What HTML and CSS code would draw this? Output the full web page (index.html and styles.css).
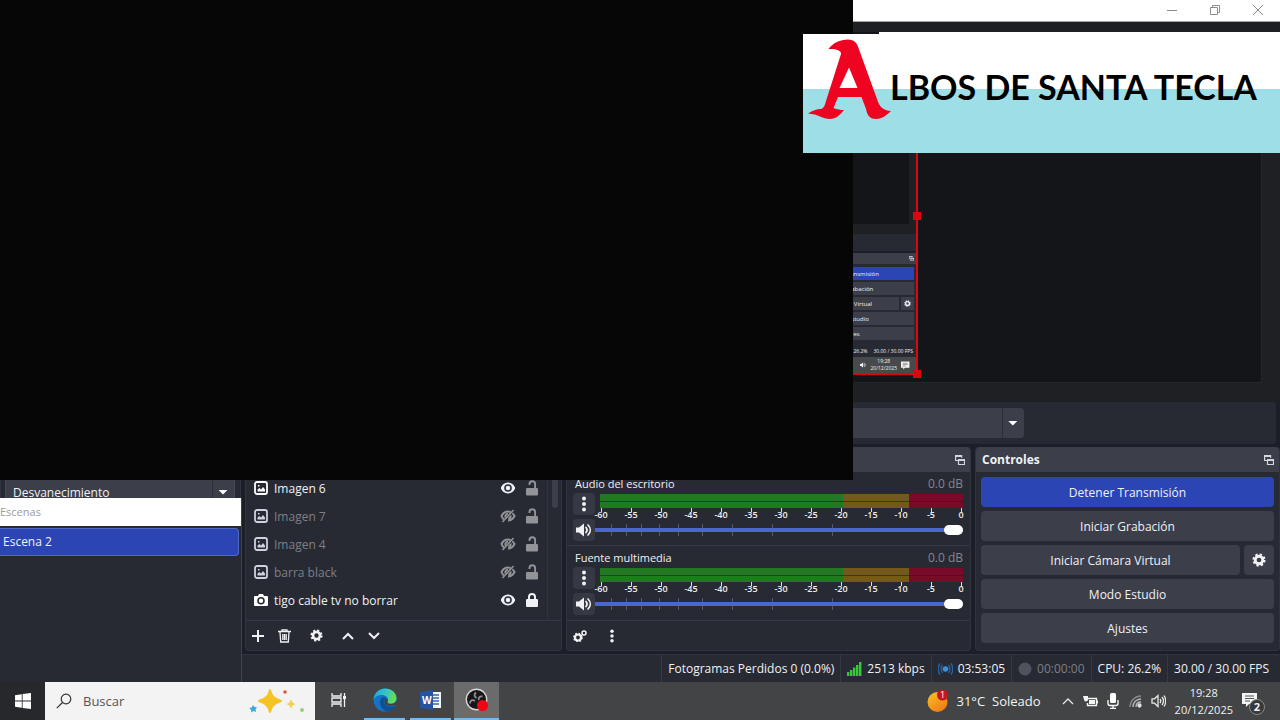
FILE: index.html
```html
<!DOCTYPE html>
<html lang="es">
<head>
    <meta charset="UTF-8">
    <meta name="viewport" content="width=device-width, initial-scale=1.0">
    <title>Albos de Santa Tecla</title>
    <link rel="stylesheet" href="styles.css">
</head>
<body>
    <!-- Shared icons -->
    <svg class="sprite" aria-hidden="true">
        <symbol id="i-image" viewBox="0 0 14 14"><rect x="1" y="1" width="12" height="12" rx="2" fill="none" stroke="currentColor" stroke-width="1.8"/><path d="M3.500 10.500V8.500L5.500 7l1.500 1.500L9 6l2 2.500v2zM4 4h1.500v1.500H4z" fill="currentColor"/></symbol>
        <symbol id="i-camera" viewBox="0 0 14 14"><path fill="currentColor" fill-rule="evenodd" d="M4 3l1-2h4l1 2h3a1 1 0 0 1 1 1v8a1 1 0 0 1-1 1H1a1 1 0 0 1-1-1V4a1 1 0 0 1 1-1zm3 1a3.800 3.800 0 1 0 0 7.600A3.800 3.800 0 0 0 7 4zm0 1.600a2.200 2.200 0 1 1 0 4.400 2.200 2.200 0 0 1 0-4.400z"/></symbol>
        <symbol id="i-eye" viewBox="0 0 16 14"><path fill="currentColor" fill-rule="evenodd" d="M8 1.500c3.500 0 6 2.300 7.300 5.500C14 10.200 11.500 12.500 8 12.500S2 10.200.7 7C2 3.800 4.500 1.500 8 1.500zm0 1.700a3.800 3.800 0 1 0 0 7.600 3.800 3.800 0 0 0 0-7.600zm0 1.500a2.300 2.300 0 1 1 0 4.600 2.300 2.300 0 0 1 0-4.600z"/></symbol>
        <symbol id="i-eye-off" viewBox="0 0 16 14"><path fill="none" stroke="currentColor" stroke-width="2" d="M4 10.500C2.700 9.600 2 8.400 1.500 7 3 4 5.300 2.500 8 2.500c1 0 1.800.2 2.500.5M12.300 4.300c1 .8 1.700 1.700 2.200 2.700-1.500 3-3.800 4.500-6.500 4.500M5.500 8.500C5 6.500 6 5 8 4.800M10.600 6.500c.2 1.500-.8 2.700-2.300 2.900"/><path d="M2.500 13L13.500 1" stroke="currentColor" stroke-width="1.600"/></symbol>
        <symbol id="i-unlock" viewBox="0 0 14 16"><path d="M4.500 5V4a2.800 2.800 0 0 1 5.600 0v5" fill="none" stroke="currentColor" stroke-width="1.900"/><rect x="1" y="8" width="12" height="7.500" rx="1" fill="currentColor"/></symbol>
        <symbol id="i-lock" viewBox="0 0 14 16"><path d="M4 8V5a3 3 0 0 1 6 0v3" fill="none" stroke="currentColor" stroke-width="2"/><rect x="1" y="7" width="12" height="8" rx="1" fill="currentColor"/></symbol>
        <symbol id="i-gear" viewBox="0 0 16 16"><circle cx="8" cy="8" r="4.300" fill="none" stroke="currentColor" stroke-width="3.200"/><circle cx="8" cy="8" r="6.200" fill="none" stroke="currentColor" stroke-width="2.600" stroke-dasharray="2.600 2.270"/></symbol>
        <symbol id="i-dots" viewBox="0 0 4 16"><g fill="currentColor"><circle cx="2" cy="2.500" r="2"/><circle cx="2" cy="8" r="2"/><circle cx="2" cy="13.500" r="2"/></g></symbol>
        <symbol id="i-speaker" viewBox="0 0 16 14"><path d="M0 4.500h3L8 .5v13L3 9.500H0z" fill="currentColor"/><path d="M10 4.500c1.300 1.500 1.300 3.500 0 5M12 2c3 3 3 7 0 10" fill="none" stroke="currentColor" stroke-width="1.700" stroke-linecap="round"/></symbol>
        <symbol id="i-float" viewBox="0 0 10 10"><path d="M3 5.500H.6V.6h6v2.200M.6 1.500h6M3.500 4.500h6v5h-6zM3.500 5.500h6" fill="none" stroke="currentColor" stroke-width="1.200"/></symbol>
        <symbol id="i-note" viewBox="0 0 16 16"><path d="M0 1h15v11H7l-3 3v-3H0z" fill="#f4f4f4"/><path d="M3 4h9M3 6.500h9M3 9h5" stroke="#555" stroke-width="1"/></symbol>
    </svg>

    <!-- Window title bar -->
    <header class="titlebar">
        <button aria-label="Minimizar"><svg width="10" height="10"><path d="M0 5.500h10"/></svg></button>
        <button aria-label="Restaurar"><svg width="10" height="10"><path d="M.5 2.500h7v7h-7zM2.500 2.500v-2h7v7h-2"/></svg></button>
        <button aria-label="Cerrar"><svg width="10" height="10"><path d="M0 0l10 10M10 0L0 10"/></svg></button>
    </header>

    <!-- Preview -->
    <main class="preview">
        <div class="canvas">
            <section class="nested">
                <div class="nested-view"></div>
                <div class="nested-bar"></div>
                <div class="nested-head"><svg width="5" height="5"><use href="#i-float"/></svg></div>
                <div class="nested-controls">
                    <div class="nested-btn live">Detener Transmisión</div>
                    <div class="nested-btn">Iniciar Grabación</div>
                    <div class="nested-row">
                        <div class="nested-btn">Iniciar Cámara Virtual</div>
                        <div class="nested-btn cog"><svg width="7" height="7"><use href="#i-gear"/></svg></div>
                    </div>
                    <div class="nested-btn">Modo Estudio</div>
                    <div class="nested-btn">Ajustes</div>
                </div>
                <div class="nested-status"><span>CPU: 26.2%</span><span>30.00 / 30.00 FPS</span></div>
                <div class="nested-taskbar">
                    <svg width="6" height="6"><use href="#i-speaker"/></svg>
                    <span>19:28<br>20/12/2025</span>
                    <svg width="9" height="9"><use href="#i-note"/></svg>
                </div>
                <i class="handle handle-mid"></i>
                <i class="handle handle-end"></i>
            </section>
        </div>
    </main>

    <div class="workspace">
        <div class="context-bar">
            <select aria-label="Fuente"><option></option></select>
        </div>

        <div class="docks">
            <section class="dock transitions">
                <div class="dock-head"></div>
                <select aria-label="Transición"><option>Desvanecimiento</option></select>
            </section>

            <!-- Sources -->
            <section class="dock sources">
                <div class="dock-head"></div>
                <div class="source-area">
                    <ul class="source-list">
                        <li><svg class="type"><use href="#i-image"/></svg><span>Imagen 6</span><svg class="eye"><use href="#i-eye"/></svg><svg class="lock open"><use href="#i-unlock"/></svg></li>
                        <li class="off"><svg class="type"><use href="#i-image"/></svg><span>Imagen 7</span><svg class="eye"><use href="#i-eye-off"/></svg><svg class="lock open"><use href="#i-unlock"/></svg></li>
                        <li class="off"><svg class="type"><use href="#i-image"/></svg><span>Imagen 4</span><svg class="eye"><use href="#i-eye-off"/></svg><svg class="lock open"><use href="#i-unlock"/></svg></li>
                        <li class="off"><svg class="type"><use href="#i-image"/></svg><span>barra black</span><svg class="eye"><use href="#i-eye-off"/></svg><svg class="lock open"><use href="#i-unlock"/></svg></li>
                        <li><svg class="type"><use href="#i-camera"/></svg><span>tigo cable tv no borrar</span><svg class="eye"><use href="#i-eye"/></svg><svg class="lock"><use href="#i-lock"/></svg></li>
                    </ul>
                    <div class="scroll"><div class="scroll-thumb"></div></div>
                </div>
                <div class="toolbar">
                    <button aria-label="Añadir"><svg width="12" height="12"><path d="M6 0v12M0 6h12" stroke="currentColor" stroke-width="2"/></svg></button>
                    <button aria-label="Eliminar"><svg width="13" height="14"><path d="M0 2.500h13M4 2V.8h5V2M2 3l.7 10h7.600L11 3M4.800 5v6M6.500 5v6M8.200 5v6" fill="none" stroke="currentColor" stroke-width="1.300"/></svg></button>
                    <button class="wide" aria-label="Propiedades"><svg width="13" height="13"><use href="#i-gear"/></svg></button>
                    <button class="wide" aria-label="Subir"><svg width="12" height="8"><path d="M1 7l5-5 5 5" fill="none" stroke="currentColor" stroke-width="2"/></svg></button>
                    <button aria-label="Bajar"><svg width="12" height="8"><path d="M1 1l5 5 5-5" fill="none" stroke="currentColor" stroke-width="2"/></svg></button>
                </div>
            </section>

            <!-- Audio mixer -->
            <section class="dock mixer">
                <div class="dock-head"><svg width="10" height="10"><use href="#i-float"/></svg></div>
                <div class="channel">
                    <label for="vol1">Audio del escritorio</label><output>0.0 dB</output>
                    <button aria-label="Opciones de audio"><svg width="4" height="16"><use href="#i-dots"/></svg></button>
                    <div class="meter">
                        <div class="bar"></div>
                        <div class="scale"><span>-60</span><span>-55</span><span>-50</span><span>-45</span><span>-40</span><span>-35</span><span>-30</span><span>-25</span><span>-20</span><span>-15</span><span>-10</span><span>-5</span><span>0</span></div>
                    </div>
                    <button aria-label="Silenciar"><svg width="16" height="14"><use href="#i-speaker"/></svg></button>
                    <div class="fader">
                        <svg viewBox="0 0 368 12" preserveAspectRatio="none"><path d="M16.500 0v12M31.500 0v12M46.500 0v12M64.500 0v12M83.500 0v12M107.500 0v12M137.500 0v12M177.500 0v12M237.500 0v12"/></svg>
                        <input type="range" id="vol1" min="0" max="100" value="100">
                    </div>
                </div>
                <div class="channel">
                    <label for="vol2">Fuente multimedia</label><output>0.0 dB</output>
                    <button aria-label="Opciones de audio"><svg width="4" height="16"><use href="#i-dots"/></svg></button>
                    <div class="meter">
                        <div class="bar"></div>
                        <div class="scale"><span>-60</span><span>-55</span><span>-50</span><span>-45</span><span>-40</span><span>-35</span><span>-30</span><span>-25</span><span>-20</span><span>-15</span><span>-10</span><span>-5</span><span>0</span></div>
                    </div>
                    <button aria-label="Silenciar"><svg width="16" height="14"><use href="#i-speaker"/></svg></button>
                    <div class="fader">
                        <svg viewBox="0 0 368 12" preserveAspectRatio="none"><path d="M16.500 0v12M31.500 0v12M46.500 0v12M64.500 0v12M83.500 0v12M107.500 0v12M137.500 0v12M177.500 0v12M237.500 0v12"/></svg>
                        <input type="range" id="vol2" min="0" max="100" value="100">
                    </div>
                </div>
                <div class="toolbar">
                    <button aria-label="Propiedades avanzadas"><svg width="14" height="12"><circle cx="5" cy="7.500" r="3" fill="none" stroke="currentColor" stroke-width="2.200"/><circle cx="5" cy="7.500" r="4.300" fill="none" stroke="currentColor" stroke-width="1.200" stroke-dasharray="1.700 1.677"/><circle cx="11" cy="3" r="2" fill="none" stroke="currentColor" stroke-width="1.500"/></svg></button>
                    <button class="wide" aria-label="Menú"><svg width="4" height="14"><use href="#i-dots"/></svg></button>
                </div>
            </section>

            <!-- Controls -->
            <section class="dock controls">
                <div class="dock-head"><h2>Controles</h2><svg width="10" height="10"><use href="#i-float"/></svg></div>
                <div class="control-list">
                    <button class="live">Detener Transmisión</button>
                    <button>Iniciar Grabación</button>
                    <div class="split">
                        <button>Iniciar Cámara Virtual</button>
                        <button class="cog" aria-label="Configurar cámara virtual"><svg width="14" height="14"><use href="#i-gear"/></svg></button>
                    </div>
                    <button>Modo Estudio</button>
                    <button>Ajustes</button>
                </div>
            </section>
        </div>

        <!-- Status bar -->
        <div class="statusbar">
            <span>Fotogramas Perdidos 0 (0.0%)</span>
            <span><svg width="15" height="14"><path fill="#35c935" d="M0 10h2.400v4H0zM3 8h2.400v6H3zM6 5.500h2.400V14H6zM9 3h2.400v11H9zM12 0h2.400v14H12z"/></svg>2513 kbps</span>
            <span><svg width="15" height="14"><circle cx="7.500" cy="7" r="2.800" fill="#3d8fe0"/><path d="M4.500 3c-2 2-2 6 0 8M10.500 3c2 2 2 6 0 8M2 1.500c-2.300 3-2.300 8 0 11M13 1.500c2.300 3 2.300 8 0 11" fill="none" stroke="#2765a8" stroke-width="1.300"/></svg>03:53:05</span>
            <span class="idle"><svg width="14" height="14"><circle cx="7" cy="7" r="6.500" fill="#50525c"/></svg>00:00:00</span>
            <span>CPU: 26.2%</span>
            <span>30.00 / 30.00 FPS</span>
        </div>

        <!-- Floating scenes window -->
        <aside class="scenes">
            <h2>Escenas</h2>
            <ul><li>Escena 2</li></ul>
        </aside>
    </div>

    <!-- Taskbar -->
    <footer class="taskbar">
        <button class="start" aria-label="Inicio"><svg width="16" height="16"><path fill="#fff" d="M0 2.200l6.800-1v6.400H0zM7.600 1.100L16 0v7.600H7.600zM0 8.400h6.800v6.400l-6.800-1zM7.600 8.400H16V16l-8.400-1.100z"/></svg></button>
        <label class="search">
            <svg width="16" height="16"><circle cx="10" cy="6" r="4.800"/><path d="M6.500 9.500L.8 15.200"/></svg>
            <input type="text" placeholder="Buscar" aria-label="Buscar">
            <svg class="stars" width="60" height="26">
                <path fill="#f6c324" d="M21 2c1.500 6 3.500 8.500 11 11-7.500 2.500-9.500 5-11 11-1.500-6-3.500-8.500-11-11 7.500-2.500 9.500-5 11-11z" stroke="#f6c324" stroke-width="2" stroke-linejoin="round"/>
                <path fill="#f3cf4a" d="M42 11c1 3.500 2 4.300 5 5-3 .8-4 1.500-5 5-1-3.500-2-4.200-5-5 3-.7 4-1.500 5-5z"/>
                <path fill="#35a8dc" d="M4 17l1.500 2 2.500.3-1.500 2L7 24l-2.700-1L2 24.500l.2-2.800L0 20l2.800-.6z"/>
                <circle cx="36" cy="4" r="1.800" fill="#e2553d"/><circle cx="53" cy="22" r="1.900" fill="#8fce78"/>
            </svg>
        </label>
        <button class="task" aria-label="Vista de tareas"><svg width="16" height="16"><path d="M1 1v3h9V1M1 15v-3h9v3M1 6h9v4H1zM13.500 1v14" fill="none" stroke="#f2f2f2" stroke-width="1.300"/><path d="M12 4h3v3h-3z" fill="#f2f2f2"/></svg></button>
        <button class="task running" aria-label="Edge"><svg width="24" height="24" viewBox="0 0 24 24">
            <defs><linearGradient id="edgeTop" x1="0" x2="1" y1="0" y2="0.300"><stop offset="0" stop-color="#21a5e0"/><stop offset="0.600" stop-color="#35c6c0"/><stop offset="1" stop-color="#67dd50"/></linearGradient></defs>
            <circle cx="12" cy="12" r="11.500" fill="#1473c4"/>
            <path fill="url(#edgeTop)" d="M.5 12C.8 5.500 5.800.5 12 .5c7 0 11.500 5 11.500 9.500 0 4-3 5.800-6 5.800-2.500 0-3.500-1-3-2 1.200-1.500 1-5-3-6.300C7 6.300 2 8 .5 12z"/>
            <path fill="#0d5299" d="M9 9.500c-4 4-2 12 5 14 4-.5 7-3 8.500-6-3 1.500-7 1.500-9.500-.5-2.500-2-2.500-5 0-7-1-1.200-3-1.300-4-.5z"/>
            <path fill="#404244" d="M12.500 10.500c-1.700 1.500-1.500 4.500.5 6 3 1.800 7 1.500 10 0l.5-3c-2 2.200-5 2.600-7 2.200-2-.4-2.500-1.200-2-2 .7-1 .4-3-2-3.200z"/>
        </svg></button>
        <button class="task running" aria-label="Word"><svg width="22" height="20"><path d="M10 2h11v16H10z" fill="#f3f6fb"/><path d="M12 5h7M12 8h7M12 11h7M12 14h7" stroke="#3c66b0" stroke-width="1.300"/><path d="M0 2l13-2v20L0 18z" fill="#2853a0"/><text class="word-mark" x="2" y="14">W</text></svg></button>
        <button class="task running active" aria-label="OBS"><svg width="24" height="24">
            <circle cx="11.500" cy="11.500" r="10.200" fill="#17171a" stroke="#d6d6d6" stroke-width="1.400"/>
            <path d="M11 4.500c-2 1.500-2 4 .5 5.500M5 15.500c0-3 2.500-4.500 5-2.500M17.500 8.500c-3-.5-4.500 1.500-3.500 3.500" fill="none" stroke="#8f8f94" stroke-width="1.800"/>
            <circle cx="17.500" cy="17.500" r="5.500" fill="#f00512"/>
        </svg></button>
        <div class="tray">
            <a class="weather" href="#"><svg width="22" height="24"><defs><linearGradient id="sun" x1="0" y1="0" x2="0.700" y2="1"><stop offset="0" stop-color="#f8c52b"/><stop offset="1" stop-color="#f07a13"/></linearGradient></defs><circle cx="10.500" cy="13" r="10" fill="url(#sun)"/><circle cx="15.500" cy="6" r="5.500" fill="#c9151e"/><text class="badge-text" x="13" y="9">1</text></svg><span>31°C</span><span>Soleado</span></a>
            <svg class="chevron" width="12" height="8"><path d="M1 7l5-5 5 5"/></svg>
            <svg width="15" height="12"><path d="M5 3.500h8.500v7H4.500V8" fill="none" stroke="#f4f4f4" stroke-width="1.400"/><path d="M6 5h6v4H6zM0 1h5v3.500a2 2 0 0 1-4 0zM14 5.500h1v3h-1z" fill="#f4f4f4"/></svg>
            <svg class="mic" width="12" height="16"><rect x="3" y="0" width="6" height="10" rx="1.500" fill="#fff"/><path d="M1 7v3.500q0 2 2 2h6q2 0 2-2V7M6 12v3M3 15.300h6" fill="none" stroke="#fff" stroke-width="1.300"/></svg>
            <svg class="wifi" width="14" height="14"><path d="M2 13C2 7 7 2 13 2" stroke="#8a8a8a"/><path d="M5 13c0-4.500 3.500-8 8-8M8 13c0-3 2-5 5-5" stroke="#bbb"/><circle cx="11.500" cy="11.500" r="1.500" fill="#ddd"/></svg>
            <svg class="sound" width="15" height="14"><path d="M1 4.800h2.500L7 1.500v11L3.500 9.200H1zM9 5q1.500 2 0 4M11 3q3 4 0 8M13 1.500q3.500 5.500 0 11"/></svg>
            <time datetime="2025-12-20T19:28">19:28<br>20/12/2025</time>
            <div class="notes"><svg width="16" height="16"><use href="#i-note"/></svg><b>2</b></div>
        </div>
    </footer>

    <!-- Stream overlays -->
    <div class="blackout"></div>
    <div class="banner">
        <div class="crest">
            <svg width="90" height="90"><path fill="#ee0420" fill-rule="evenodd" d="M25.500 15C30 9 37 5.500 45 5.500c6 0 9 3.500 10.500 8.500l18.500 51c2.500 8 6 11.500 14 12-5 5-10 8-15 8-7 0-9-5-10-10L58.500 63H35l-4.500 11c4 1.500 7 2 10.500 2-4 5-8 9-14 9-7 0-12-5-22-5.500 5-3 8-4.500 13-4.500 3-1 4-4 5-8L38 20c.5-4-6-5.500-12.500-5zM46 33.500L36.500 54h18z"/></svg>
        </div>
        <h1>LBOS DE SANTA TECLA</h1>
    </div>
</body>
</html>
```
FILE: styles.css
```css
* {
    box-sizing: border-box;
}
body {
    margin: 0;
    min-height: 100vh;
    position: relative;
    display: flex;
    flex-direction: column;
    background-color: #1d1f28;
    color: #f0f1f4;
    font-family: "Open Sans", "Noto Sans", sans-serif;
    font-size: 12px;
    overflow-x: hidden;
}
h1, h2, ul {
    margin: 0;
    padding: 0;
    list-style: none;
}
button, select, input {
    font: inherit;
    color: inherit;
    border: none;
    padding: 0;
    margin: 0;
}
button {
    background: none;
    display: flex;
    align-items: center;
    justify-content: center;
}
.sprite {
    position: absolute;
    width: 0;
    height: 0;
}

/* Title bar */
.titlebar {
    height: 22px;
    display: flex;
    justify-content: flex-end;
    padding-right: 1px;
    background-color: #fff;
    border-bottom: 1px solid #a5a5a8;
}
.titlebar button {
    width: 43px;
    height: 20px;
}
.titlebar path {
    fill: none;
    stroke: #8c8c8c;
}

/* Preview */
.preview {
    flex: 1;
    display: flex;
    padding: 10px 18px 19px 0;
    background-color: #1f2024;
}
.canvas {
    flex: 1;
    position: relative;
    background-color: #141519;
    border-right: 1px solid #25262b;
    border-bottom: 1px solid #25262b;
}
.nested {
    position: absolute;
    top: 25px;
    right: 343px;
    bottom: 7px;
    width: 480px;
    display: flex;
    flex-direction: column;
    background-color: #1d1f28;
    border: 2px solid #dc0511;
    font-size: 6px;
    line-height: 8px;
}
.nested-view {
    flex: 1;
    background-color: #141519;
    border-right: 7px solid #1f2024;
    border-bottom: 10px solid #1f2024;
}
.nested-bar {
    height: 17px;
    background-color: #272a33;
}
.nested-head {
    height: 11px;
    margin-top: 2px;
    padding: 3px 2px;
    display: flex;
    justify-content: flex-end;
    background-color: #3c3e4a;
}
.nested-controls {
    align-self: flex-end;
    width: 131px;
    display: flex;
    flex-direction: column;
    gap: 2px;
    padding: 3px 2px 5px 0;
    background-color: #272a33;
}
.nested-btn {
    flex: 1;
    height: 13px;
    display: flex;
    align-items: center;
    justify-content: center;
    background-color: #3c3e4a;
}
.nested-controls > .nested-btn {
    flex: none;
}
.nested-row {
    display: flex;
    gap: 2px;
}
.nested-btn.cog {
    flex: 0 0 13px;
}
.nested-status {
    display: flex;
    justify-content: flex-end;
    gap: 6px;
    padding: 2px 3px;
    background-color: #272a33;
    font-size: 5px;
}
.nested-taskbar {
    height: 16px;
    display: flex;
    align-items: center;
    justify-content: flex-end;
    gap: 4px;
    padding-right: 6px;
    background-color: #48494b;
    font-size: 5px;
    line-height: 7px;
    text-align: center;
}
.handle {
    position: absolute;
    right: -5px;
    width: 8px;
    height: 8px;
    background-color: #dc0511;
}
.handle-mid {
    top: calc(50% - 4px);
}
.handle-end {
    bottom: -5px;
}

/* Workspace */
.workspace {
    position: relative;
}
.context-bar {
    display: grid;
    grid-template-columns: 80% 1fr;
    align-items: center;
    margin: 0 4px 3px 0;
    padding: 6px 0;
    background-color: #272a33;
    border-radius: 0 4px 4px 0;
}
select {
    appearance: none;
    height: 30px;
    padding: 0 8px;
    border-radius: 4px;
    background: linear-gradient(#2c2e38, #2c2e38) no-repeat right 21px center / 1px 100% #3c3e4a;
}
.context-bar select {
    grid-area: 1 / 1;
    margin-right: -3px;
}
.context-bar::after, .transitions::after {
    content: "";
    width: 10px;
    height: 5px;
    background-color: #fff;
    clip-path: polygon(0 0, 100% 0, 50% 100%);
}
.context-bar::after {
    grid-area: 1 / 1;
    justify-self: end;
    margin-right: 3px;
}
.docks {
    display: grid;
    grid-template-columns: 241px 317px minmax(300px, 1fr) 305px;
    gap: 4px;
}
.dock {
    display: flex;
    flex-direction: column;
    background-color: #272a33;
    border: 1px solid #31343f;
    border-top: none;
    border-radius: 4px;
}
.dock-head {
    height: 25px;
    display: flex;
    align-items: center;
    justify-content: flex-end;
    padding: 0 5px 0 6px;
    background-color: #3c3e4a;
    border-radius: 4px 4px 0 0;
}
.dock-head h2 {
    margin-right: auto;
    font-size: 12px;
}
.dock-head svg {
    color: #d4d5da;
}
.transitions {
    display: grid;
    grid-template-rows: 25px 30px 1fr;
    row-gap: 5px;
}
.transitions select {
    grid-area: 2 / 1;
    margin: 0 5px 0 4px;
    padding: 0 7px;
    border: 1px solid #464956;
}
.transitions::after {
    grid-area: 2 / 1;
    place-self: center end;
    margin-right: 12px;
}
.toolbar {
    height: 30px;
    display: flex;
    align-items: center;
    gap: 14px;
    padding: 0 6px;
    border-top: 1px solid #363944;
}
.sources .toolbar .wide {
    margin-left: 5px;
}
.toolbar .wide {
    margin-left: 9px;
}

/* Sources */
.source-area {
    flex: 1;
    display: flex;
}
.source-list {
    flex: 1;
    padding-top: 2px;
}
.source-list li {
    height: 28px;
    display: flex;
    align-items: center;
    padding: 0 8px;
}
.source-list span {
    flex: 1;
    padding-left: 6px;
}
.source-list .off {
    color: #7d7f85;
}
.type {
    width: 14px;
    height: 14px;
    color: #fff;
}
.off .type {
    color: #cfd1dc;
}
.eye {
    width: 16px;
    height: 14px;
}
.lock {
    width: 14px;
    height: 16px;
    margin-left: 9px;
}
.off .eye, .lock.open {
    color: #929397;
}
.scroll {
    width: 14px;
    padding: 2px 4px;
    border-left: 1px solid #31343f;
}
.scroll-thumb {
    width: 6px;
    height: 34px;
    border-radius: 0 0 3px 3px;
    background-color: #3c3e4a;
}

/* Mixer */
.channel {
    display: grid;
    grid-template-columns: 22px 1fr auto;
    grid-template-rows: 19px 26px 22px;
    padding: 2px 7px 4px 6px;
    border-bottom: 1px solid #363944;
    height: 74px;
}
.channel:nth-child(3) {
    border-bottom: none;
}
.channel label {
    grid-column: 1 / 3;
    padding-left: 2px;
    font-size: 11px;
    line-height: 19px;
}
.channel output {
    line-height: 19px;
    color: #85878d;
}
.channel button {
    height: 22px;
    border-radius: 4px;
    background-color: #363843;
}
.meter {
    grid-column: 2 / 4;
    padding: 1px 0 0 5px;
}
.bar {
    height: 14px;
    background:
        linear-gradient(rgba(30, 30, 35, 0.6), rgba(30, 30, 35, 0.6)) no-repeat 0 7px / 100% 1px,
        linear-gradient(90deg, #217a22 67%, #73591a 67% 85%, #790a28 85%);
}
.scale {
    display: flex;
    justify-content: space-between;
    margin: 0 -9px 0 -10px;
    font-size: 9px;
    font-weight: 600;
    line-height: 13px;
}
.scale span {
    width: 22px;
    text-align: center;
    background: linear-gradient(#dcdde0, #dcdde0) no-repeat 11px 0 / 1px 4px;
}
.fader {
    grid-column: 2 / 4;
    display: grid;
    align-items: center;
}
.fader svg {
    grid-area: 1 / 1;
    width: 100%;
    height: 12px;
}
.fader path {
    stroke: #555965;
}
.fader input {
    grid-area: 1 / 1;
    appearance: none;
    width: 100%;
    height: 12px;
    background: linear-gradient(#4b66cf, #4b66cf) no-repeat center / 100% 4px;
}
.fader input::-webkit-slider-thumb {
    appearance: none;
    width: 19px;
    height: 10px;
    border-radius: 5px;
    background-color: #fff;
}

/* Controls */
.control-list {
    display: flex;
    flex-direction: column;
    gap: 4px;
    padding: 5px 5px 4px;
}
.control-list button {
    height: 30px;
    flex: none;
    border-radius: 4px;
    background-color: #3c3e4a;
}
.live, .control-list .live {
    background-color: #2b46b4;
}
.control-list .split {
    display: flex;
    gap: 4px;
}
.split button:first-child {
    flex: 1;
}
.split .cog {
    width: 30px;
}

/* Status bar */
.statusbar {
    height: 28px;
    margin-top: 3px;
    display: flex;
    justify-content: flex-end;
    align-items: stretch;
    background-color: #272a33;
    border-top: 1px solid #31343f;
    padding-right: 5px;
}
.statusbar span {
    display: flex;
    align-items: center;
    gap: 5px;
    padding: 0 6px;
    border-left: 1px solid #363944;
}
.statusbar .idle {
    color: #7d7f85;
}

/* Scenes window */
.scenes {
    position: absolute;
    left: 0;
    bottom: 0;
    width: 242px;
    height: 184px;
    background-color: #272a33;
    border-right: 1px solid #3f424e;
}
.scenes h2 {
    height: 28px;
    background-color: #fff;
    color: #9b9b9b;
    font-size: 11px;
    font-weight: 400;
    line-height: 28px;
}
.scenes li {
    margin: 2px 2px 0 0;
    padding: 0 3px;
    border: 1px solid #5068c8;
    border-left: none;
    border-radius: 0 4px 4px 0;
    background-color: #2b46b4;
    line-height: 26px;
}

/* Taskbar */
.taskbar {
    height: 38px;
    display: flex;
    background-color: #434445;
    font-size: 13px;
}
.start {
    width: 45px;
    background-color: #26282b;
}
.search {
    width: 270px;
    display: flex;
    align-items: center;
    margin-right: 1px;
    padding: 0 6px 0 11px;
    background-color: #f3f3f3;
    color: #555;
}
.search > svg:first-child {
    fill: none;
    stroke: #333;
    stroke-width: 1.2;
}
.search input {
    flex: 1;
    min-width: 0;
    padding-left: 11px;
    background: none;
}
.search input::placeholder {
    color: #555;
    opacity: 1;
}
.task {
    width: 45px;
    margin-right: 1px;
    border-bottom: 2px solid transparent;
}
.task.running {
    border-image: linear-gradient(90deg, transparent 4px, #76b9ed 4px 41px, transparent 41px) 2;
    border-width: 0 0 2px;
    border-style: solid;
}
.task.active {
    background-color: #6b6b6b;
    border-image: none;
    border-color: #76b9ed;
}
.word-mark {
    fill: #fff;
    font-size: 10px;
    font-weight: 700;
}
.tray {
    margin-left: auto;
    display: flex;
    align-items: center;
    gap: 9px;
    padding-right: 14px;
}
.weather {
    display: flex;
    align-items: center;
    gap: 7px;
    margin-right: 12px;
    color: #f4f4f4;
    text-decoration: none;
}
.badge-text {
    fill: #fff;
    font-size: 9px;
}
.chevron, .wifi, .sound {
    fill: none;
    stroke: #e6e6e6;
    stroke-width: 1.3;
}
time {
    font-size: 11px;
    line-height: 17px;
    text-align: center;
}
.notes {
    position: relative;
    width: 24px;
    height: 18px;
}
.notes b {
    position: absolute;
    left: 7px;
    top: 7px;
    width: 16px;
    height: 16px;
    border: 1px solid #8a8a8a;
    border-radius: 50%;
    background-color: #37393b;
    font-size: 11px;
    line-height: 14px;
    text-align: center;
}

/* Overlays */
.blackout {
    position: absolute;
    top: 0;
    left: 0;
    width: 66.6667%;
    height: 66.6667%;
    background-color: #060606;
}
.banner {
    position: absolute;
    top: 32px;
    right: 0;
    width: 477px;
    height: 121px;
    display: flex;
}
.crest {
    width: 76px;
    margin-top: 2px;
    background: linear-gradient(#fff 55px, #9edee7 55px);
}
.crest svg {
    position: relative;
    display: block;
}
.banner h1 {
    flex: 1;
    padding-left: 11px;
    background: linear-gradient(#fff 57px, #9edee7 57px);
    color: #000;
    font-family: Lato, sans-serif;
    font-size: 34px;
    font-weight: 700;
    line-height: 110px;
    white-space: nowrap;
}
```
